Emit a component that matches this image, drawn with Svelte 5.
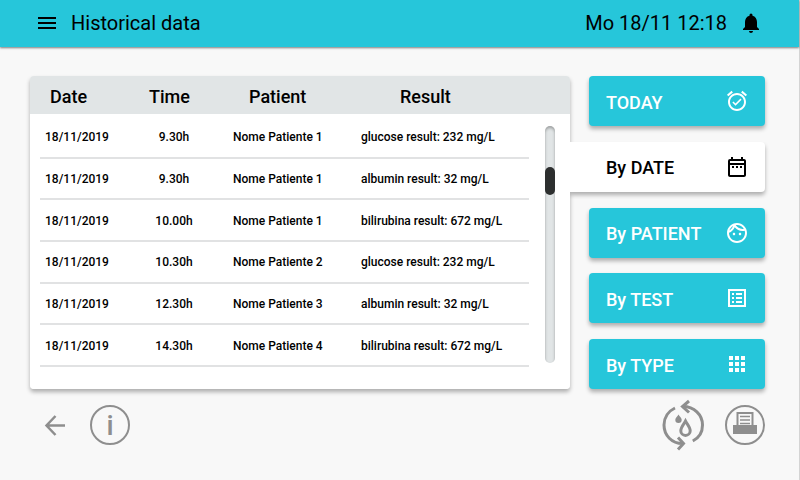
<script lang="ts">
	interface Row {
		date: string;
		time: string;
		patient: string;
		result: string;
	}

	const rows: Row[] = [
		{ date: '18/11/2019', time: '9.30h', patient: 'Nome Patiente 1', result: 'glucose result: 232 mg/L' },
		{ date: '18/11/2019', time: '9.30h', patient: 'Nome Patiente 1', result: 'albumin result: 32 mg/L' },
		{ date: '18/11/2019', time: '10.00h', patient: 'Nome Patiente 1', result: 'bilirubina result: 672 mg/L' },
		{ date: '18/11/2019', time: '10.30h', patient: 'Nome Patiente 2', result: 'glucose result: 232 mg/L' },
		{ date: '18/11/2019', time: '12.30h', patient: 'Nome Patiente 3', result: 'albumin result: 32 mg/L' },
		{ date: '18/11/2019', time: '14.30h', patient: 'Nome Patiente 4', result: 'bilirubina result: 672 mg/L' }
	];

	const filters = [
		{ id: 'today', label: 'TODAY', icon: 'M22 5.72l-4.6-3.86-1.29 1.53 4.6 3.86L22 5.72zM7.88 3.39L6.6 1.86 2 5.71l1.29 1.53 4.59-3.85zM12 4c-4.97 0-9 4.03-9 9s4.02 9 9 9c4.97 0 9-4.03 9-9s-4.03-9-9-9zm0 16c-3.87 0-7-3.13-7-7s3.13-7 7-7 7 3.13 7 7-3.13 7-7 7zm-1.46-5.47L8.41 12.4l-1.06 1.06 3.18 3.18 6-6-1.06-1.06-4.93 4.95z' },
		{ id: 'date', label: 'By DATE', icon: 'M19 4h-1V2h-2v2H8V2H6v2H5a2 2 0 0 0-2 2v14c0 1.1.9 2 2 2h14c1.1 0 2-.9 2-2V6c0-1.1-.9-2-2-2zm0 16H5V10h14v10zm0-12H5V6h14v2zM7 11h2v2H7zm4 0h2v2h-2zm4 0h2v2h-2z' },
		{ id: 'patient', label: 'By PATIENT', icon: 'M10.25 13c0 .69-.56 1.25-1.25 1.25S7.75 13.69 7.75 13s.56-1.25 1.25-1.25 1.25.56 1.25 1.25zM15 11.75c-.69 0-1.25.56-1.25 1.25s.56 1.25 1.25 1.25 1.25-.56 1.25-1.25-.56-1.25-1.25-1.25zm7 .25c0 5.52-4.48 10-10 10S2 17.52 2 12 6.48 2 12 2s10 4.48 10 10zM10.66 4.12C12.06 6.44 14.6 8 17.5 8c.46 0 .91-.05 1.34-.12C17.44 5.56 14.9 4 12 4c-.46 0-.91.05-1.34.12zM4.42 9.47c1.71-.97 3.03-2.55 3.66-4.44C6.37 6 5.05 7.58 4.42 9.47zM20 12c0-.78-.12-1.53-.33-2.24-.7.15-1.42.24-2.17.24-3.13 0-5.92-1.44-7.76-3.69C8.69 8.87 6.6 10.88 4 11.86c.01.04 0 .09 0 .14 0 4.42 3.58 8 8 8s8-3.58 8-8z' },
		{ id: 'test', label: 'By TEST', icon: 'M3 3v18h18V3H3zm16 16H5V5h14v14zM11 7h6v2h-6V7zm0 4h6v2h-6v-2zm0 4h6v2h-6v-2zM7 7h2v2H7V7zm0 4h2v2H7v-2zm0 4h2v2H7v-2z' },
		{ id: 'type', label: 'By TYPE', icon: 'M4 8h4V4H4v4zm6 12h4v-4h-4v4zm-6 0h4v-4H4v4zm0-6h4v-4H4v4zm6 0h4v-4h-4v4zm6-10v4h4V4h-4zm-6 4h4V4h-4v4zm6 6h4v-4h-4v4zm0 6h4v-4h-4v4z' }
	];

	let active = $state('date');
</script>

<div class="screen">
	<header class="topbar">
		<button class="icon-btn" aria-label="Menu">
			<svg width="24" height="24" viewBox="0 0 24 24" fill="currentColor">
				<path d="M3 18h18v-2H3v2zm0-5h18v-2H3v2zm0-7v2h18V6H3z" />
			</svg>
		</button>
		<h1>Historical data</h1>
		<time>Mo 18/11 12:18</time>
		<button class="icon-btn" aria-label="Notifications">
			<svg width="24" height="24" viewBox="0 0 24 24" fill="currentColor">
				<path d="M12 22c1.1 0 2-.9 2-2h-4c0 1.1.9 2 2 2zm6-6v-5c0-3.07-1.63-5.64-4.5-6.32V4a1.5 1.5 0 0 0-3 0v.68C7.64 5.36 6 7.92 6 11v5l-2 2v1h16v-1l-2-2z" />
			</svg>
		</button>
	</header>

	<main>
		<section class="card">
			<table>
				<colgroup>
					<col class="col-date" />
					<col class="col-time" />
					<col class="col-patient" />
					<col />
				</colgroup>
				<thead>
					<tr>
						<th>Date</th>
						<th class="time">Time</th>
						<th class="patient">Patient</th>
						<th class="result">Result</th>
					</tr>
				</thead>
				<tbody>
					{#each rows as row}
						<tr>
							<td class="date">{row.date}</td>
							<td class="time">{row.time}</td>
							<td>{row.patient}</td>
							<td>{row.result}</td>
						</tr>
					{/each}
				</tbody>
			</table>
			<div class="scrollbar">
				<div class="thumb"></div>
			</div>
		</section>

		<nav class="filters">
			{#each filters as filter}
				<button class="filter" class:active={active === filter.id} onclick={() => (active = filter.id)}>
					<span>{filter.label}</span>
					<svg width="24" height="24" viewBox="0 0 24 24" fill="currentColor" fill-rule="evenodd">
						<path d={filter.icon} />
					</svg>
				</button>
			{/each}
		</nav>
	</main>

	<footer>
		<button class="icon-btn" aria-label="Back">
			<svg width="30" height="30" viewBox="0 0 30 30" fill="none" stroke="currentColor" stroke-width="2.5">
				<path d="M25 15.5H7M15.5 6l-9 9.5 9 9.5" />
			</svg>
		</button>
		<button class="icon-btn round" aria-label="Info">i</button>
		<span class="spacer"></span>
		<button class="icon-btn" aria-label="Refresh sample">
			<svg width="44" height="52" viewBox="1 1 44 52" fill="none" stroke="currentColor" stroke-width="3">
				<path d="M15 10A19 19 0 0 0 4 27c0 10.500 8 18.500 18.500 18.500" />
				<path d="M23 8.500C34 8.500 42.500 16.500 42.500 27c0 7-3.800 13-9.700 16" />
				<path d="M29 3l-6.500 5.500L29 14.500M18 39.500l5.500 6-5.500 6" />
				<path d="M25.500 23c-1.800 3.300-4.700 6.300-4.700 9.700a4.700 4.700 0 0 0 9.400 0c0-3.400-2.900-6.400-4.700-9.700z" />
				<path d="M18.500 16.500c-1.200 2-3.200 3.500-3.200 5.300a3.200 3.200 0 0 0 6.400 0c0-1.800-2-3.300-3.200-5.300z" fill="currentColor" stroke="none" />
			</svg>
		</button>
		<button class="icon-btn round" aria-label="Print">
			<svg width="26" height="26" viewBox="0 1 26 26">
				<path d="M1 14h3.500V1h17v13H25v9H1z" fill="currentColor" />
				<path d="M6.500 3h13v11h-13z" fill="#f8f8f8" />
				<path d="M8 5.500h10M8 9h10M8 12.500h10" stroke="currentColor" stroke-width="1.500" />
			</svg>
		</button>
	</footer>
</div>

<style>
	:global(body) {
		background: #f8f8f8;
	}

	.screen {
		min-height: 100vh;
		box-sizing: border-box;
		border-right: 1px solid #d4d4d4;
		font-family: Roboto, 'Liberation Sans', sans-serif;
		color: #000;
	}

	button {
		font-family: inherit;
		border: none;
		cursor: pointer;
	}

	.topbar {
		display: flex;
		align-items: center;
		height: 47px;
		box-sizing: border-box;
		padding: 0 36px 1px 35px;
		background: #26c6da;
		box-shadow: 0 1px 2px rgba(0, 0, 0, 0.5);
	}

	h1,
	time {
		margin: 0 0 0 12px;
		font-size: 20px;
		font-weight: 400;
		line-height: 24px;
	}

	time {
		margin: 0 12px 0 auto;
	}

	.icon-btn {
		display: flex;
		align-items: center;
		justify-content: center;
		padding: 0;
		background: transparent;
		color: inherit;
	}

	main {
		display: flex;
		gap: 19px;
		padding: 29px 34px 0 30px;
	}

	.card {
		flex: 1;
		display: flex;
		gap: 16px;
		box-sizing: border-box;
		min-height: 313px;
		padding: 0 15px 0 10px;
		border-radius: 4px;
		background: linear-gradient(#e1e5e6 38px, #fff 38px);
		box-shadow: 0 3px 4px rgba(0, 0, 0, 0.3);
	}

	table {
		flex: 1;
		height: 291px;
		table-layout: fixed;
		border-collapse: separate;
		border-spacing: 0;
		text-align: left;
	}

	.col-date {
		width: 94px;
	}

	.col-time {
		width: 80px;
	}

	.col-patient {
		width: 128px;
	}

	th {
		height: 41px;
		padding: 0 0 0 10px;
		font-size: 18px;
		font-weight: 500;
		line-height: 24px;
	}

	th.time {
		padding-left: 15px;
	}

	th.patient {
		padding-left: 35px;
	}

	th.result {
		padding-left: 58px;
	}

	td {
		padding: 1px 0 0 19px;
		border-bottom: 2px solid #e1e2e3;
		font-size: 12px;
		font-weight: 500;
		line-height: 16px;
		white-space: nowrap;
	}

	td.date {
		padding-left: 5px;
	}

	td.time {
		padding-left: 0;
		text-align: center;
	}

	.scrollbar {
		width: 10px;
		height: 237px;
		margin-top: 50px;
		border-radius: 5px;
		background: #e1e5e6;
		box-shadow: inset 0 2px 3px rgba(0, 0, 0, 0.3);
	}

	.thumb {
		position: relative;
		top: 41px;
		height: 28px;
		border-radius: 5px;
		background: #2d2f2f;
	}

	.filters {
		display: flex;
		flex-direction: column;
		justify-content: space-between;
		width: 176px;
	}

	.filter {
		display: flex;
		align-items: center;
		justify-content: space-between;
		height: 50px;
		padding: 0 16px 0 17px;
		border-radius: 4px;
		background: #26c6da;
		box-shadow: 0 3px 4px rgba(0, 0, 0, 0.3);
		color: #fff;
		font-size: 18px;
		font-weight: 500;
		line-height: 24px;
	}

	.filter span {
		padding-top: 3px;
	}

	.filter.active {
		margin-left: -19px;
		padding-left: 36px;
		border-radius: 0 4px 4px 0;
		background: #fff;
		color: #000;
		clip-path: inset(0 -8px -8px 0);
	}

	footer {
		display: flex;
		align-items: center;
		padding: 10px 34px 0 40px;
		color: #8e8e8e;
	}

	.round {
		box-sizing: border-box;
		width: 40px;
		height: 40px;
		margin-left: 20px;
		border: 2px solid currentColor;
		border-radius: 50%;
		font-size: 28px;
		font-weight: 500;
	}

	.spacer {
		flex: 1;
	}
</style>
